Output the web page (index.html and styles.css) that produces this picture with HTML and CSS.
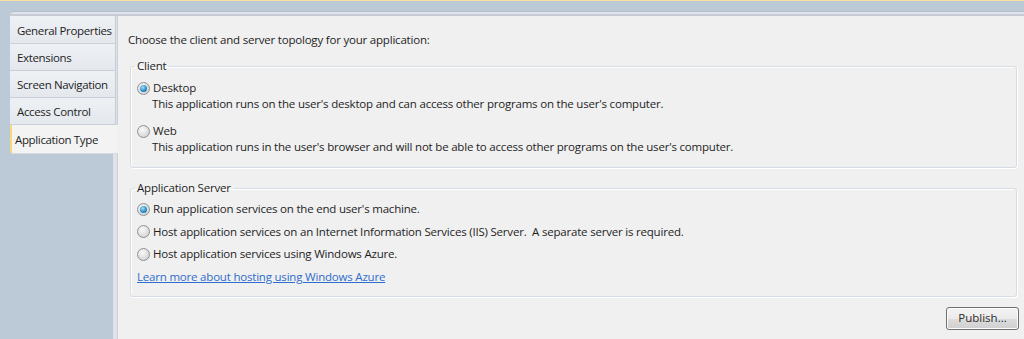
FILE: index.html
```html
<!DOCTYPE html>
<html lang="en">
  <head>
    <meta charset="UTF-8" />
    <title>Application Type</title>
    <link rel="stylesheet" href="styles.css">
  </head>
  <body>
    <div class="topline"></div>
    <div class="frame-top"></div>
    <div class="frame">
      <nav class="tabs">
        <div class="tab">General Properties</div>
        <div class="tab">Extensions</div>
        <div class="tab">Screen Navigation</div>
        <div class="tab">Access Control</div>
        <div class="tab selected">Application Type</div>
      </nav>
      <main class="page">
        <p class="intro">Choose the client and server topology for your application:</p>

        <fieldset class="group client">
          <legend>Client</legend>
          <div class="option"><span class="radio checked"></span>Desktop</div>
          <p class="desc">This application runs on the user's desktop and can access other programs on the user's computer.</p>
          <div class="option web"><span class="radio"></span>Web</div>
          <p class="desc">This application runs in the user's browser and will not be able to access other programs on the user's computer.</p>
        </fieldset>

        <fieldset class="group server">
          <legend>Application Server</legend>
          <div class="option"><span class="radio checked"></span>Run application services on the end user's machine.</div>
          <div class="option"><span class="radio"></span>Host application services on an Internet Information Services (IIS) Server.&nbsp; A separate server is required.</div>
          <div class="option"><span class="radio"></span>Host application services using Windows Azure.</div>
          <a class="link" href="#">Learn more about hosting using Windows Azure</a>
        </fieldset>

        <div class="actions">
          <button type="button" class="btn">Publish...</button>
        </div>
      </main>
    </div>
  </body>
</html>
```

FILE: styles.css
```css
html,
body {
  height: 100%;
}
body {
  margin: 0;
  background: #bccad8;
  font-family: "Open Sans", "Noto Sans", sans-serif;
  font-size: 11.5px;
  letter-spacing: -0.2px;
  color: #1e1e1e;
  overflow: hidden;
}
.topline {
  height: 1px;
  background: #fbe29c;
}
.frame-top {
  margin: 10px 0 0 10px;
  height: 2px;
  border-top: 1px solid #b2becb;
  border-bottom: 2px solid #c5ccd6;
  border-radius: 4px 0 0 0;
  background: #e1e5eb;
}
.frame {
  display: flex;
  height: calc(100% - 16px);
}

/* tabs kiri */
.tabs {
  position: relative;
  z-index: 1;
  width: 103px;
  margin-left: 10px;
  flex-shrink: 0;
}
.tab {
  width: 106px;
  height: 27px;
  line-height: 28px;
  padding-left: 7px;
  box-sizing: border-box;
  background: linear-gradient(#eef1f4, #e4e8ed);
  border-bottom: 1px solid #c9d0d9;
  border-right: 1px solid #c4ccd6;
  letter-spacing: -0.35px;
  white-space: nowrap;
  overflow: hidden;
}
.tab:first-child {
  height: 28px;
  line-height: 29px;
}
.tab.selected {
  width: 108px;
  height: 29px;
  line-height: 30px;
  padding-left: 3px;
  background: #f3f3f3;
  border-left: 2px solid #f6d978;
  border-right: none;
  border-bottom: 1px solid #d6dbe1;
  border-radius: 0 0 0 3px;
}

/* isi halaman */
.page {
  flex: 1;
  background: #f0f0f0;
  border-left: 4px solid #dfe3e8;
  box-shadow: inset 1px 0 #c9d0d9;
  padding: 16px 7px 0 11px;
  line-height: 16px;
}
.intro {
  margin: 0;
}
.group {
  margin: 10px 0 0 2px;
  padding: 5px 8px 12px 6px;
  border: 1px solid #d5dce3;
  border-radius: 3px;
  box-shadow: inset 1px 1px #fff, 1px 1px #fff;
}
.group legend {
  padding: 0 2px;
  margin-left: -2px;
  line-height: 16px;
}
.client .option:first-of-type {
  margin-top: 1px;
}
.option {
  display: flex;
  align-items: center;
  white-space: nowrap;
}
.option.web {
  margin-top: 11px;
}
.desc {
  margin: 0 0 0 15px;
  white-space: nowrap;
}
.server {
  margin-top: 12px;
  padding-bottom: 11px;
}
.server .option + .option,
.server .link {
  margin-top: 6.5px;
}
.radio {
  width: 11px;
  height: 11px;
  border: 1px solid #8f9294;
  border-radius: 50%;
  margin-right: 3px;
  flex-shrink: 0;
  box-sizing: content-box;
  background: radial-gradient(circle at 40% 35%, #fbfbfb, #dcdcdc 60%, #c9c9c9);
  display: flex;
  align-items: center;
  justify-content: center;
}
.radio.checked::after {
  content: "";
  width: 7px;
  height: 7px;
  border-radius: 50%;
  background: radial-gradient(circle at 40% 35%, #a6e2f8, #2b8fc9 55%, #145c91);
}
.link {
  display: block;
  width: max-content;
  color: #2e6ccd;
  text-decoration: underline;
}
.actions {
  margin-top: 10px;
  text-align: right;
}
.btn {
  width: 73px;
  height: 23px;
  margin-right: -2px;
  padding: 0;
  font: inherit;
  color: #2a2a2a;
  background: linear-gradient(#f3f3f3 0%, #ebebeb 50%, #dddddd 51%, #cfcfcf 100%);
  border: 1px solid #707070;
  border-radius: 3px;
  box-shadow: inset 0 0 0 1px #fcfcfc;
}
```
